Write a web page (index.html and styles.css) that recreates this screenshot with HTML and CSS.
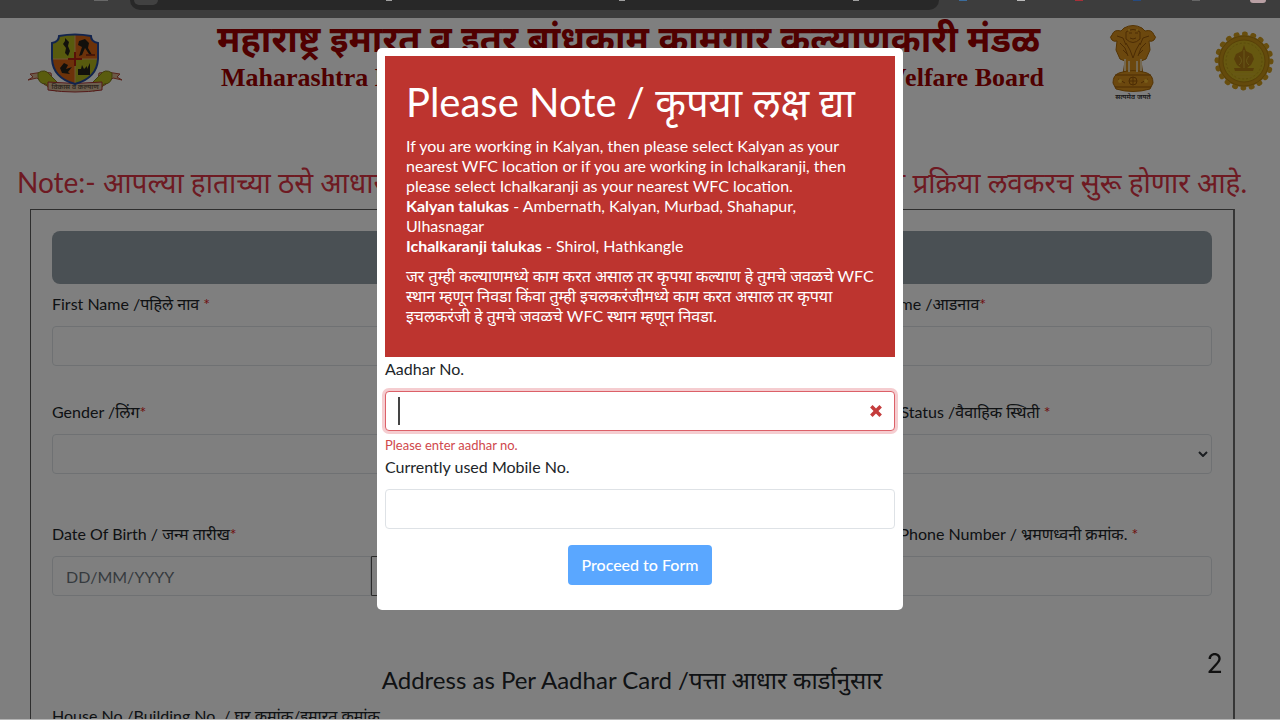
FILE: index.html
```html
<!DOCTYPE html>
<html lang="mr">
<head>
<meta charset="utf-8">
<title>Registration</title>
<link rel="stylesheet" href="styles.css">
</head>
<body>
<div class="chrome" aria-hidden="true">
  <span class="tick tick-tab"></span>
  <div class="omnibox"><span class="site-dot"></span><span class="tick"></span><span class="tick"></span><span class="tick"></span></div>
  <div class="extensions"><span class="ext blue"></span><span class="ext white"></span><span class="ext red"></span><span class="ext navy"></span><span class="ext grey"></span><span class="ext avatar"></span></div>
</div>

<main class="page">
  <header class="site-header">
    <svg class="logo-shield" viewBox="0 0 96 62" aria-label="Board logo">
      <path d="M3 42l13-2 8 1 2 13-8-1-8-7-9 2 5-3zM93 42l-13-2-8 1-2 13 8-1 8-7 9 2-5-3z" fill="#d8b490" stroke="#b04838" stroke-width="1"/>
      <path d="M11 41q7-5 12 2l7 7v9q-9-1-11-7-9 0-8-11zM85 41q-7-5-12 2l-7 7v9q9-1 11-7 9 0 8-11z" fill="#b4b81c" stroke="#80801c" stroke-width="1"/>
      <path d="M21 50q27 3 54 0v8q-27 4-54 0z" fill="#d8bc9c" stroke="#a83030" stroke-width="1"/>
      <clipPath id="shield"><path d="M32 4q16-3 32 0 0 6 7 7v16Q70 46 48 52 26 46 25 27V11q7-1 7-7z"/></clipPath>
      <g clip-path="url(#shield)">
        <path d="M24 0h24v27H24zM48 27h24v27H48z" fill="#b0b41c"/>
        <path d="M48 0h24v27H48zM24 27h24v27H24z" fill="#d86414"/>
        <path d="M48 2v50M25 27h46" stroke="#e0a868" stroke-width="1"/>
        <path d="M48 20v14M41 27h14" stroke="#b02010" stroke-width="2"/>
        <path d="M38 6l4 4-1 4 2 5-2 5-3-3 1-5-3-4 2-3zM52 9l6-2 4 4-1 5 4 7-3-1-4-6-3 7-3 1 3-9-4-2zM37 31l4 2-2 4 6-2-4 5 2 2-8-1-2-5zM51 43v-6h3l1-4 2 4 3-3v3l3-6v12z" fill="#242018"/>
        <path d="M59 23h9" stroke="#802010" stroke-width="1.5"/>
      </g>
      <path d="M32 4q16-3 32 0 0 6 7 7v16Q70 46 48 52 26 46 25 27V11q7-1 7-7z" fill="none" stroke="#24489c" stroke-width="2"/>
      <text x="48" y="57" text-anchor="middle" class="ribbon-text">विकास व कल्याण</text>
    </svg>
    <div class="board-name">
      <h1 class="name-mr">महाराष्ट्र इमारत व इतर बांधकाम कामगार कल्याणकारी मंडळ</h1>
      <p class="name-en"><span>Maharashtra Building and Other</span><span>Construction Welfare Board</span></p>
    </div>
    <svg class="logo-lions" viewBox="0 0 48 78" aria-label="National emblem">
      <g fill="#d8901c" stroke="#a86808" stroke-width="1">
        <path d="M15 3q9-5 18 0l3 3q7-2 9 4 3 2 0 5-2 2-5 1l1 9-4 9-5 2 2 14H14l2-14-5-2-4-9 1-9q-3 1-5-1-3-3 0-5 2-6 9-4z"/>
        <path d="M10 48q14-5 28 0 6 2 6 10l-3 6q-17 5-34 0l-3-6q0-8 6-10z"/>
      </g>
      <path d="M16 34v12M20 36v11M28 36v11M32 34v12" stroke="#e8d0a0" stroke-width="2"/>
      <g fill="none" stroke="#985808" stroke-width="1">
        <path d="M17 7q7-5 14 0v7q-7 7-14 0zM20 8h3M26 8h3M21 13q3 2 6 0M8 11l6 2 3 7M40 11l-6 2-3 7M11 18l5 5 3 8M37 18l-5 5-3 8M17 18l4 7 3 8 3-8 4-7M14 25l5 5M34 25l-5 5"/>
        <circle cx="24" cy="56" r="4"/><path d="M24 52v8M20 56h8M9 54l7 4M39 54l-7 4M6 50h36M6 62h36"/>
      </g>
      <g fill="#f0b830"><circle cx="11" cy="56" r="2"/><circle cx="37" cy="56" r="2"/><circle cx="20" cy="5" r="1"/><circle cx="28" cy="5" r="1"/></g>
      <text x="24" y="74" text-anchor="middle" class="motto">सत्यमेव जयते</text>
    </svg>
    <svg class="logo-seal" viewBox="0 0 62 62" aria-label="State seal">
      <circle cx="31" cy="31" r="26" fill="#c89418"/>
      <circle cx="31" cy="31" r="27" fill="none" stroke="#d09c1c" stroke-width="5" stroke-linecap="round" stroke-dasharray="1 7.48"/>
      <circle cx="31" cy="31" r="25" fill="none" stroke="#b08010" stroke-width="1"/>
      <circle cx="31" cy="31" r="21" fill="#ccb020" stroke="#b08010" stroke-width="1"/>
      <circle cx="31" cy="31" r="18" fill="none" stroke="#b89818" stroke-width="1" stroke-dasharray="2 2"/>
      <path d="M31 15l2 6 6 3 2 5-3 6-4 3h7l-1 3H22l-1-3h7l-4-3-3-6 2-5 6-3z" fill="#b07c14"/>
      <path d="M31 20v18M26 26q5 5 0 9M36 26q-5 5 0 9M20 44h22M23 47h16" fill="none" stroke="#d0b030" stroke-width="1"/>
    </svg>
  </header>

  <p class="notice"><span>Note:- आपल्या हाताच्या ठसे आधारशी</span><span>करण्याची प्रक्रिया लवकरच सुरू होणार आहे.</span></p>

  <form class="panel">
    <div class="section-bar"></div>
    <div class="row">
      <div class="field"><label for="first">First Name /पहिले नाव <b class="req">*</b></label><input id="first" class="control" type="text"></div>
      <div class="field"><label for="middle">Middle Name</label><input id="middle" class="control" type="text"></div>
      <div class="field"><label for="last">Last Name /आडनाव<b class="req">*</b></label><input id="last" class="control" type="text"></div>
    </div>
    <div class="row row-wide">
      <div class="field"><label for="gender">Gender /लिंग<b class="req">*</b></label><select id="gender" class="control"><option></option></select></div>
      <div class="field"><label for="age">Age</label><input id="age" class="control" type="text"></div>
      <div class="field"><label for="marital">Marital Status /वैवाहिक स्थिती <b class="req">*</b></label>
        <div class="select-wrap"><select id="marital" class="control"><option></option></select><svg class="chevron" viewBox="0 0 10 6"><path d="M1 1l4 4 4-4"/></svg></div></div>
    </div>
    <div class="row">
      <div class="field"><label for="dob">Date Of Birth / जन्म तारीख<b class="req">*</b></label><div class="date-group"><input id="dob" class="control" type="text" placeholder="DD/MM/YYYY"><button type="button" class="date-btn" aria-label="Calendar"></button></div></div>
      <div class="field"><label for="aadhar2">Aadhar</label><input id="aadhar2" class="control" type="text"></div>
      <div class="field"><label for="phone">Mobile Phone Number / भ्रमणध्वनी क्रमांक. <b class="req">*</b></label><input id="phone" class="control" type="text"></div>
    </div>
    <h2 class="section-title">Address as Per Aadhar Card /पत्ता आधार कार्डानुसार</h2>
    <div class="row">
      <div class="field"><label for="house">House No./Building No. / घर क्रमांक/इमारत क्रमांक</label><input id="house" class="control" type="text"></div>
    </div>
  </form>
</main>

<div class="backdrop">
  <section class="modal" role="dialog" aria-modal="true" aria-labelledby="note-title">
    <div class="alert">
      <h2 id="note-title" class="alert-title">Please Note / कृपया लक्ष द्या</h2>
      <p>If you are working in Kalyan, then please select Kalyan as your<br>nearest WFC location or if you are working in Ichalkaranji, then<br>please select Ichalkaranji as your nearest WFC location.<br><b>Kalyan talukas</b> - Ambernath, Kalyan, Murbad, Shahapur,<br>Ulhasnagar<br><b>Ichalkaranji talukas</b> - Shirol, Hathkangle</p>
      <p>जर तुम्ही कल्याणमध्ये काम करत असाल तर कृपया कल्याण हे तुमचे जवळचे WFC<br>स्थान म्हणून निवडा किंवा तुम्ही इचलकरंजीमध्ये काम करत असाल तर कृपया<br>इचलकरंजी हे तुमचे जवळचे WFC स्थान म्हणून निवडा.</p>
    </div>
    <label class="modal-label" for="aadhar">Aadhar No.</label>
    <div class="input-wrap">
      <input id="aadhar" class="control invalid" type="text" aria-describedby="aadhar-error">
      <span class="caret"></span>
      <svg class="cross" viewBox="0 0 12 12"><path d="M2 2l8 8M10 2l-8 8"/></svg>
    </div>
    <p id="aadhar-error" class="error">Please enter aadhar no.</p>
    <label class="modal-label" for="mobile">Currently used Mobile No.</label>
    <input id="mobile" class="control" type="text">
    <button type="button" class="proceed">Proceed to Form</button>
  </section>
</div>
<span class="slide-number">2</span>
</body>
</html>
```
FILE: styles.css
```css
* { box-sizing: border-box; }
body {
  margin: 0;
  height: 100vh;
  display: flex;
  flex-direction: column;
  overflow: hidden;
  background: #fff;
  color: #212529;
  font: 16px/20px Lato, "Noto Sans", sans-serif;
}
body::after {
  content: "";
  position: relative;
  z-index: 3;
  flex: none;
  height: 1px;
  background: #b4b4b4;
}
h1, h2, p { margin: 0; font-weight: 400; }

.chrome {
  position: relative;
  z-index: 3;
  flex: none;
  display: flex;
  align-items: flex-start;
  height: 18px;
  padding: 0 14px 0 94px;
  background: #3d3d3d;
}
.tick { width: 6px; height: 1px; background: #a0a0a0; }
.tick-tab { width: 14px; margin-right: 22px; background: #686868; }
.omnibox {
  width: 69%;
  height: 10px;
  display: flex;
  justify-content: space-between;
  padding: 0 80px 0 4px;
  border-radius: 0 0 14px 14px;
  background: #282828;
}
.site-dot { width: 24px; height: 5px; border-radius: 0 0 14px 14px; background: #414141; }
.extensions { flex: 1; display: flex; justify-content: space-between; padding-left: 20px; }
.ext { width: 8px; height: 1px; }
.blue { background: #3b6c9c; }
.white { background: #bbb; }
.red { background: #a83038; }
.navy { background: #254a80; }
.grey { background: #666; }
.avatar { width: 16px; height: 3px; border-radius: 0 0 8px 8px; background: #b9a0a4; }

.page { flex: 1; min-height: 0; overflow: hidden; }
.site-header {
  display: flex;
  align-items: flex-start;
  height: 146px;
  padding: 0 5px 0 27px;
}
.logo-shield { flex: none; width: 96px; height: 62px; margin-top: 14px; }
.ribbon-text { font: 600 7px "Noto Sans", sans-serif; fill: #605040; }
.board-name { flex: 1; min-width: 0; margin: 0 61px 0 94px; color: #a00000; }
.name-mr { white-space: nowrap; font: 700 36px/42px "Noto Sans", sans-serif; }
.name-en { display: flex; justify-content: space-between; padding: 2px 4px 0; white-space: nowrap; font: 700 26px/32px "Liberation Serif", serif; }
.logo-lions { flex: none; width: 48px; height: 78px; margin: 7px 56px 0 0; }
.motto { font: 600 7px "Noto Sans", sans-serif; fill: #303030; }
.logo-seal { flex: none; width: 62px; height: 62px; margin-top: 12px; }

.notice {
  display: flex;
  justify-content: space-between;
  padding: 0 33px 0 17px;
  color: #dc3545;
  font-size: 28px;
  line-height: 36px;
  white-space: nowrap;
}
.panel {
  margin: 9px 45px 0 30px;
  padding: 21px;
  border: 1px solid #5c5c5c;
  border-right: 2px solid #6c6c6c;
}
.section-bar { height: 53px; margin-bottom: 10px; border-radius: 8px; background: #95a0a8; }
.row { display: grid; grid-template-columns: repeat(3, minmax(0, 1fr)); gap: 32px; margin-bottom: 36px; }
.row-wide { margin-bottom: 50px; }
.field { display: flex; flex-direction: column; gap: 12px; white-space: nowrap; }
.req { color: #e02020; font-weight: 400; }
.control {
  width: 100%;
  height: 40px;
  padding: 0 13px;
  border: 1px solid #dee2e6;
  border-radius: 4px;
  background: #fff;
  color: #212529;
  font: inherit;
  outline: 0;
  appearance: none;
}
.control::placeholder { color: #6c757d; opacity: 1; }
.select-wrap, .input-wrap { position: relative; }
.select-wrap .control { display: block; }
.chevron { position: absolute; right: 4px; top: 17px; width: 10px; height: 6px; fill: none; stroke: #343a40; stroke-width: 2; }
.date-group { display: flex; }
.date-group .control { border-radius: 4px 0 0 4px; }
.date-btn { flex: none; width: 46px; border: 1px solid #555; border-radius: 0 4px 4px 0; background: #fff; }
.section-title { margin: 66px 0 8px; text-align: center; font-size: 24px; line-height: 36px; }

.backdrop {
  position: fixed;
  inset: 0;
  z-index: 2;
  display: flex;
  align-items: flex-start;
  justify-content: center;
  padding: 48px 16px 0;
  background: rgba(0, 0, 0, .5);
}
.modal {
  display: flex;
  flex-direction: column;
  width: 100%;
  max-width: 526px;
  padding: 8px 8px 25px;
  border-radius: 5px;
  background: #fff;
}
.alert { padding: 20px 0 31px 21px; background: #bd342f; color: #fff; white-space: nowrap; font-weight: 500; }
.alert p + p { margin-top: 10px; }
.alert-title { margin-bottom: 8px; font-size: 40px; line-height: 52px; }
.modal-label { margin: 2px 0 12px; }
.control.invalid { display: block; border-color: #dc6068; box-shadow: 0 0 0 3px #f5cdd0; }
.caret { position: absolute; left: 13px; top: 6px; width: 2px; height: 28px; background: #444; }
.cross { position: absolute; right: 12px; top: 13px; width: 14px; height: 14px; fill: none; stroke: #c43c3c; stroke-width: 3; }
.error { margin-top: 4px; color: #d0484c; font-size: 13px; line-height: 20px; }
.proceed {
  align-self: center;
  height: 40px;
  margin-top: 16px;
  padding: 0 13px;
  border: 0;
  border-radius: 4px;
  background: #5aa7ff;
  color: #fff;
  font: 500 16px/20px Lato, "Noto Sans", sans-serif;
}
.slide-number { position: fixed; right: 57px; bottom: 40px; z-index: 4; color: #111; font: 27px/32px Inter, sans-serif; }
```
